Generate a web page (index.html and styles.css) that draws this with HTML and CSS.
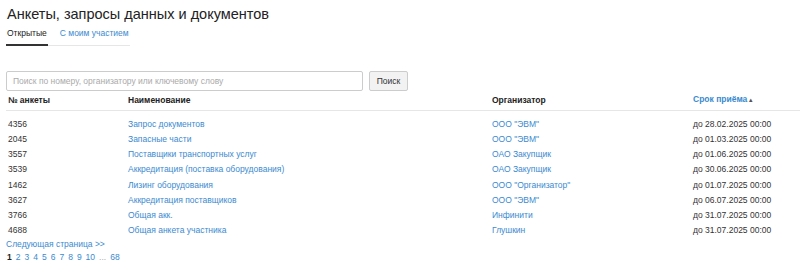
FILE: index.html
```html
<!DOCTYPE html>
<html lang="ru">
<head>
    <meta charset="UTF-8">
    <title>Анкеты, запросы данных и документов</title>
    <link rel="stylesheet" href="styles.css">
</head>
<body>

<h1 class="page-title">Анкеты, запросы данных и документов</h1>

<div class="tabs">
    <a class="tab tab-active">Открытые</a>
    <a class="tab" href="#">С моим участием</a>
</div>

<form class="search-form">
    <input type="text" class="search-input" placeholder="Поиск по номеру, организатору или ключевому слову">
    <button type="button" class="search-button">Поиск</button>
</form>

<table class="forms-table">
    <thead>
    <tr>
        <th class="col-num">№ анкеты</th>
        <th class="col-name">Наименование</th>
        <th class="col-org">Организатор</th>
        <th class="col-date"><a href="#">Срок приёма</a> <span class="sort-arrow">▲</span></th>
    </tr>
    </thead>
    <tbody>
    <tr>
        <td>4356</td>
        <td><a href="#">Запрос документов</a></td>
        <td><a href="#">ООО "ЭВМ"</a></td>
        <td>до 28.02.2025 00:00</td>
    </tr>
    <tr>
        <td>2045</td>
        <td><a href="#">Запасные части</a></td>
        <td><a href="#">ООО "ЭВМ"</a></td>
        <td>до 01.03.2025 00:00</td>
    </tr>
    <tr>
        <td>3557</td>
        <td><a href="#">Поставщики транспортных услуг</a></td>
        <td><a href="#">ОАО Закупщик</a></td>
        <td>до 01.06.2025 00:00</td>
    </tr>
    <tr>
        <td>3539</td>
        <td><a href="#">Аккредитация (поставка оборудования)</a></td>
        <td><a href="#">ОАО Закупщик</a></td>
        <td>до 30.06.2025 00:00</td>
    </tr>
    <tr>
        <td>1462</td>
        <td><a href="#">Лизинг оборудования</a></td>
        <td><a href="#">ООО "Организатор"</a></td>
        <td>до 01.07.2025 00:00</td>
    </tr>
    <tr>
        <td>3627</td>
        <td><a href="#">Аккредитация поставщиков</a></td>
        <td><a href="#">ООО "ЭВМ"</a></td>
        <td>до 06.07.2025 00:00</td>
    </tr>
    <tr>
        <td>3766</td>
        <td><a href="#">Общая акк.</a></td>
        <td><a href="#">Инфинити</a></td>
        <td>до 31.07.2025 00:00</td>
    </tr>
    <tr>
        <td>4688</td>
        <td><a href="#">Общая анкета участника</a></td>
        <td><a href="#">Глушкин</a></td>
        <td>до 31.07.2025 00:00</td>
    </tr>
    </tbody>
</table>

<div class="next-page"><a href="#">Следующая страница &gt;&gt;</a></div>

<div class="pager">
    <span class="pager-current">1</span>
    <a href="#">2</a>
    <a href="#">3</a>
    <a href="#">4</a>
    <a href="#">5</a>
    <a href="#">6</a>
    <a href="#">7</a>
    <a href="#">8</a>
    <a href="#">9</a>
    <a href="#">10</a>
    <span class="pager-gap">...</span>
    <a href="#">68</a>
</div>

</body>
</html>
```

FILE: styles.css
```css
body {
    font-family: "Liberation Sans", Arial, sans-serif;
    font-size: 8.5px;
    color: #333;
    background-color: #fff;
    margin: 0;
    padding: 0 0 0 6px;
}

a {
    color: #3b8ad0;
    text-decoration: none;
}

.page-title {
    font-size: 14.5px;
    font-weight: normal;
    color: #222;
    margin: 0;
    padding: 5px 0 0 1px;
    line-height: 18px;
}

.tabs {
    display: inline-flex;
    margin-top: 2px;
    border-bottom: 1px solid #e6e6e6;
    white-space: nowrap;
}

.tab {
    padding: 2px 1px 5px 1px;
    margin-right: 11px;
    line-height: 12px;
}

.tab:last-child {
    margin-right: 0;
}

.tab-active {
    color: #222;
    border-bottom: 2px solid #333;
    margin-bottom: -1px;
}

.search-form {
    display: flex;
    align-items: center;
    margin-top: 25px;
}

.search-input {
    width: 357px;
    height: 20px;
    box-sizing: border-box;
    border: 1px solid #ccc;
    border-radius: 2px;
    padding: 0 6px;
    font-family: inherit;
    font-size: 8.5px;
    color: #333;
}

.search-input::placeholder {
    color: #aaa;
}

.search-button {
    margin-left: 6px;
    height: 20px;
    width: 39px;
    box-sizing: border-box;
    border: 1px solid #ccc;
    border-radius: 2px;
    background: #f2f2f2;
    font-family: inherit;
    font-size: 8.5px;
    color: #333;
    padding: 0;
}

.forms-table {
    width: 794px;
    border-collapse: collapse;
    margin-top: 0;
}

.forms-table th {
    text-align: left;
    font-weight: bold;
    color: #222;
    padding: 2px 2px 4px 2px;
    line-height: 12px;
    border-bottom: 1px solid #e6e6e6;
}

.forms-table th a {
    color: #3b8ad0;
}

.sort-arrow {
    font-size: 6px;
    color: #555;
    margin-left: -2px;
}

.col-num {
    width: 116px;
}

.col-name {
    width: 360px;
}

.col-org {
    width: 197px;
}

.forms-table td {
    padding: 1px 2px 2px 2px;
    line-height: 12.15px;
}

.forms-table tbody tr:first-child td {
    padding-top: 7px;
}

.next-page {
    margin-top: 0;
    line-height: 12px;
}

.pager {
    display: flex;
    gap: 4px;
    margin-top: 1px;
    line-height: 12px;
    padding-left: 1px;
}

.pager-current {
    font-weight: bold;
    color: #222;
}

.pager-gap {
    color: #aaa;
}
```
